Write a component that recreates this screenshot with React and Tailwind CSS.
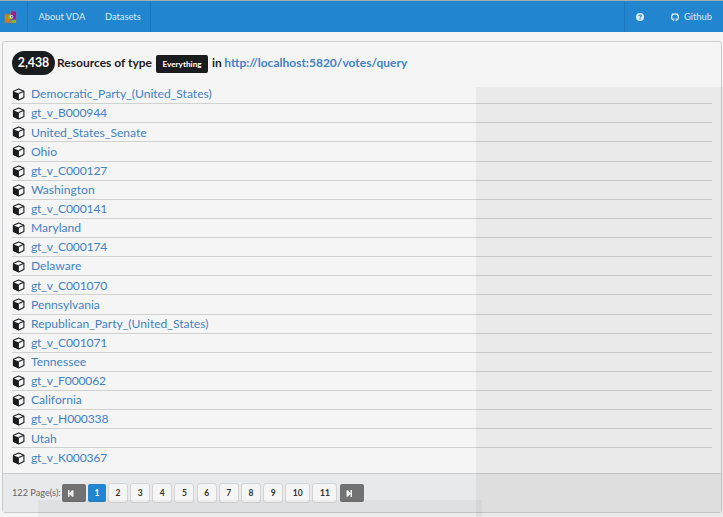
const resources = [
  'Democratic_Party_(United_States)', 'gt_v_B000944', 'United_States_Senate', 'Ohio',
  'gt_v_C000127', 'Washington', 'gt_v_C000141', 'Maryland', 'gt_v_C000174', 'Delaware',
  'gt_v_C001070', 'Pennsylvania', 'Republican_Party_(United_States)', 'gt_v_C001071',
  'Tennessee', 'gt_v_F000062', 'California', 'gt_v_H000338', 'Utah', 'gt_v_K000367',
];

function Cube() {
  return (
    <svg className="mt-[1px] h-[13px] w-[13px] shrink-0" viewBox="0 0 13 13">
      <path d="M6.7 1.1 L11.9 3.2 V9.4 L6.7 12 L1.4 9.4 V3.2 Z" fill="#f5f5f5" stroke="#1b1c1d" strokeWidth="1.1" strokeLinejoin="round" />
      <path d="M1.1 3.3 L6.9 5.6 V12.3 L1.1 9.7 Z" fill="#1b1c1d" />
      <path d="M6.7 5.6 L12 3.3" stroke="#1b1c1d" strokeWidth="1.1" />
    </svg>
  );
}

function Logo() {
  return (
    <svg className="mt-[1px] h-[13px] w-[13px]" viewBox="0 0 13 13">
      <path d="M0 2.5 H6 V0 H12.5 V12.5 H0 Z" fill="#5b7fa0" />
      <rect x="1" y="3.5" width="6" height="8" fill="#d97b06" />
      <rect x="7" y="0.5" width="5" height="8" fill="#a01c93" />
      <rect x="7.5" y="9.3" width="4.5" height="2.5" fill="#9bb91c" />
      <circle cx="6.3" cy="5.9" r="2.5" fill="#84b83c" />
      <circle cx="7.5" cy="5.7" r="1.8" fill="#c9dff5" />
      <rect x="7" y="5" width="1.5" height="1.5" fill="#4265c5" />
      <circle cx="6.6" cy="9.5" r="1" fill="#328fc5" />
    </svg>
  );
}

function Step({ next }) {
  return (
    <div className="flex h-[18px] w-6 items-center rounded-[2px] bg-[#727272] pl-[6px]">
      <svg className={next ? 'h-[7px] w-[6px] -scale-x-100' : 'h-[7px] w-[6px]'} viewBox="0 0 6 7">
        <path d="M0 0 H1.5 V2.9 L4.2 0.3 H5.5 V6.7 H4.2 L1.5 4.1 V7 H0 Z" fill="#eeeeee" />
      </svg>
    </div>
  );
}

function Page({ n }) {
  if (n === 1) {
    return <div className="mr-[2px] ml-[2px] flex h-[18px] w-[18px] items-center justify-center rounded-[2px] bg-[#2185d0] text-[8.5px] font-bold text-white">1</div>;
  }
  return (
    <div className={`${n > 9 ? 'w-[25px]' : 'w-5'} mr-[2.17px] flex h-5 items-center justify-center rounded-[3px] border border-[#d4d4d5] bg-[#f5f5f5] text-[8.5px] font-bold text-[#333]`}>
      {n}
    </div>
  );
}

export default function App() {
  return (
    <div className="relative h-[517px] w-[723px] overflow-hidden bg-[#f5f5f5] font-['Lato',sans-serif] text-[#1b1c1d]">
      <nav className="flex h-8 items-stretch border-t border-[#a5adb3] bg-[#2185d0] text-[9.3px] text-[#dcebf7]">
        <div className="flex w-7 items-center border-r border-[#1c76ba] pl-1">
          <Logo />
        </div>
        <div className="flex w-[123px] items-center border-r border-[#1c76ba] pt-[1px] pl-[10.5px]">
          <span className="w-[66.5px]">About VDA</span>
          <span>Datasets</span>
        </div>
        <div className="ml-auto flex w-[99px] items-center border-l border-[#1c76ba] pl-[11px]">
          <svg className="h-2 w-2" viewBox="0 0 8 8">
            <circle cx="4" cy="4" r="4" fill="#dcebf7" />
            <path d="M2.8 3 C2.9 1.6 5.3 1.6 5.2 3 C5.1 3.8 4.1 3.8 4.1 4.7" fill="none" stroke="#2185d0" strokeWidth="1.1" />
            <rect x="3.5" y="5.3" width="1.1" height="1.1" fill="#2185d0" />
          </svg>
          <svg className="ml-[27px] mt-[1px] h-2 w-2" viewBox="0 0 8 8">
            <path d="M2.7 7.2 C1.3 6.7 0.6 5.5 0.6 4.1 C0.6 2.2 2.1 0.9 4 0.9 C5.9 0.9 7.4 2.2 7.4 4.1 C7.4 5.5 6.7 6.7 5.3 7.2" fill="none" stroke="#dcebf7" strokeWidth="1.25" />
            <path d="M0.9 0.3 L3 1.2 L1.2 3 Z M7.1 0.3 L5 1.2 L6.8 3 Z M2.2 5.5 H3.3 V7.9 H2.2 Z M4.7 5.5 H5.8 V7.9 H4.7 Z" fill="#dcebf7" />
          </svg>
          <span className="ml-[5px] pt-[1px]">Github</span>
        </div>
      </nav>

      <main className="mt-[9px] ml-[2px] flex h-[472px] w-[720px] flex-col rounded-[3px] border border-[#c9caca]">
        <header className="mx-[9px] flex h-[43px] items-center whitespace-nowrap text-[12px] font-bold">
          <span className="-mt-[1px] flex h-6 w-[43px] shrink-0 items-center justify-center rounded-full bg-[#1b1c1d] text-[12.3px] text-white">2,438</span>
          <span className="-mt-[2px] ml-[2px] w-[99px] shrink-0">Resources of type</span>
          <span className="mt-[1px] flex h-[18px] w-[52px] shrink-0 items-center justify-center rounded-[2px] bg-[#1b1c1d] pt-[1px] text-[8.2px] text-white">Everything</span>
          <span className="-mt-[2px] ml-1">in</span>
          <a className="-mt-[2px] ml-[2.5px] text-[#4183c4]">http://localhost:5820/votes/query</a>
        </header>
        <ul className="mx-[9px] h-[388px]">
          {resources.map((name) => (
            <li key={name} className="flex h-[19.13px] items-center border-b border-[#d0d1d1] text-[12.1px] text-[#4183c4] last:border-0">
              <Cube />
              <span className={name.startsWith('gt_') ? 'ml-[6px] pt-[0.5px] tracking-[-0.17px]' : 'ml-[6px] pt-[0.5px]'}>{name}</span>
            </li>
          ))}
        </ul>
        <footer className="flex flex-1 items-center border-t border-[#c9caca] bg-[#e8e9ea] pl-[9px]">
          <span className="w-[50px] whitespace-nowrap text-[9.2px] text-[#666]">122 Page(s):</span>
          <Step />
          {[1, 2, 3, 4, 5, 6, 7, 8, 9, 10, 11].map((n) => <Page key={n} n={n} />)}
          <Step next />
        </footer>
      </main>

      <div className="pointer-events-none absolute top-[87px] left-[476px] h-[430px] w-[247px] bg-black/[0.045]" />
      <div className="pointer-events-none absolute top-[500px] left-[38px] h-[17px] w-[444px] bg-black/[0.035]" />
    </div>
  );
}
